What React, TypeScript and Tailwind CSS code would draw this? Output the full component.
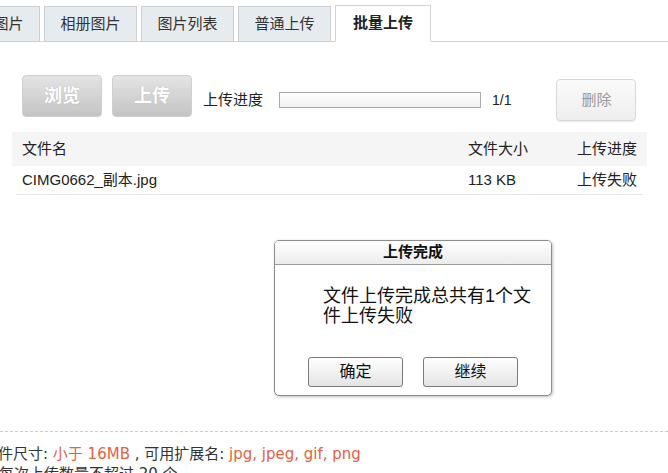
import React from 'react';

const tabs = ['本地图片', '相册图片', '图片列表', '普通上传'];

export default function App() {
  return (
    <div className="relative w-[668px] h-[473px] overflow-hidden bg-white text-[#333] font-['Liberation_Sans','Noto_Sans_CJK_SC',sans-serif]">
      {/* tab bar */}
      <div className="flex items-end h-[42px] border-b border-[#cfd3d6]">
        <div className="flex items-end gap-1 ml-[-53px]">
          {tabs.map((t) => (
            <div
              key={t}
              className="w-[93px] h-[36px] -mb-px flex items-center justify-center bg-[#e6ebf0] border border-[#c9cfd4] text-[15px] text-[#333]"
            >
              {t}
            </div>
          ))}
          <div className="w-[96px] h-[37px] -mb-px flex items-center justify-center bg-white border border-[#cfd3d6] border-b-white text-[15px] font-bold text-[#222]">
            批量上传
          </div>
        </div>
      </div>

      {/* toolbar */}
      <div className="flex items-center mt-[33px] pl-[22px]">
        <button className="w-[80px] h-[42px] mb-[8px] rounded-[4px] border border-[#cfcfcf] bg-gradient-to-b from-[#e4e4e4] to-[#c4c4c4] text-white text-[18px] font-bold [text-shadow:0_0_1px_#aaa]">
          浏览
        </button>
        <button className="w-[80px] h-[42px] mb-[8px] ml-[10px] rounded-[4px] border border-[#cfcfcf] bg-gradient-to-b from-[#e4e4e4] to-[#c4c4c4] text-white text-[18px] font-bold [text-shadow:0_0_1px_#aaa]">
          上传
        </button>
        <span className="ml-[11px] text-[15px] text-[#222]">上传进度</span>
        <div className="ml-[16px] w-[202px] h-[16px] border border-[#a9a9a9] bg-gradient-to-b from-white to-[#f0f0f0]" />
        <span className="ml-[11px] text-[14px] text-[#222]">1/1</span>
        <button className="ml-[45px] w-[80px] h-[42px] rounded-[4px] border border-[#d9d9d9] bg-gradient-to-b from-[#fafafa] to-[#eeeeee] text-[15px] text-[#999] shadow-[0_1px_1px_rgba(0,0,0,0.08)]">
          删除
        </button>
      </div>

      {/* file table */}
      <div className="ml-[12px] mt-[7px] w-[635px] text-[15px] text-[#222]">
        <div className="flex items-center h-[34px] bg-[#f5f5f5] pl-[10px]">
          <span className="flex-1">文件名</span>
          <span className="w-[109px]">文件大小</span>
          <span className="w-[70px]">上传进度</span>
        </div>
        <div className="mx-[4px] flex items-center h-[29px] border-b border-[#e6e6e6] pl-[6px]">
          <span className="flex-1">CIMG0662_副本.jpg</span>
          <span className="w-[109px]">113 KB</span>
          <span className="w-[66px]">上传失败</span>
        </div>
      </div>

      {/* footer info */}
      <div className="mt-[236px] border-t border-dashed border-[#cccccc]" />
      <div className="ml-[-17px] mt-[12px] text-[15px] leading-[20px] text-[#333] font-['DejaVu_Sans','Noto_Sans_CJK_SC',sans-serif]">
        <p>
          文件尺寸: <span className="text-[#e5603f]">小于 16MB</span> , 可用扩展名:{' '}
          <span className="text-[#e5603f]">jpg, jpeg, gif, png</span>
        </p>
        <p className="ml-[16px]">每次上传数量不超过 20 个</p>
      </div>

      {/* result dialog */}
      <div className="absolute left-[274px] top-[240px] w-[278px] h-[156px] flex flex-col rounded-[5px] border border-[#8c8c8c] bg-white shadow-[1px_1px_3px_rgba(0,0,0,0.25)] overflow-hidden">
        <div className="h-[24px] flex items-center justify-center border-b border-[#9a9a9a] bg-gradient-to-b from-white to-[#ececec] text-[15px] font-bold text-[#111]">
          上传完成
        </div>
        <p className="mt-[21px] ml-[48px] w-[212px] text-[18px] leading-[20px] text-[#111]">
          文件上传完成总共有1个文件上传失败
        </p>
        <div className="mt-auto mb-[8px] flex justify-center gap-[20px]">
          <button className="w-[95px] h-[30px] rounded-[3px] border border-[#7a7a7a] bg-gradient-to-b from-white to-[#e4e4e4] text-[16px] text-[#111]">
            确定
          </button>
          <button className="w-[95px] h-[30px] rounded-[3px] border border-[#7a7a7a] bg-gradient-to-b from-white to-[#e4e4e4] text-[16px] text-[#111]">
            继续
          </button>
        </div>
      </div>
    </div>
  );
}
